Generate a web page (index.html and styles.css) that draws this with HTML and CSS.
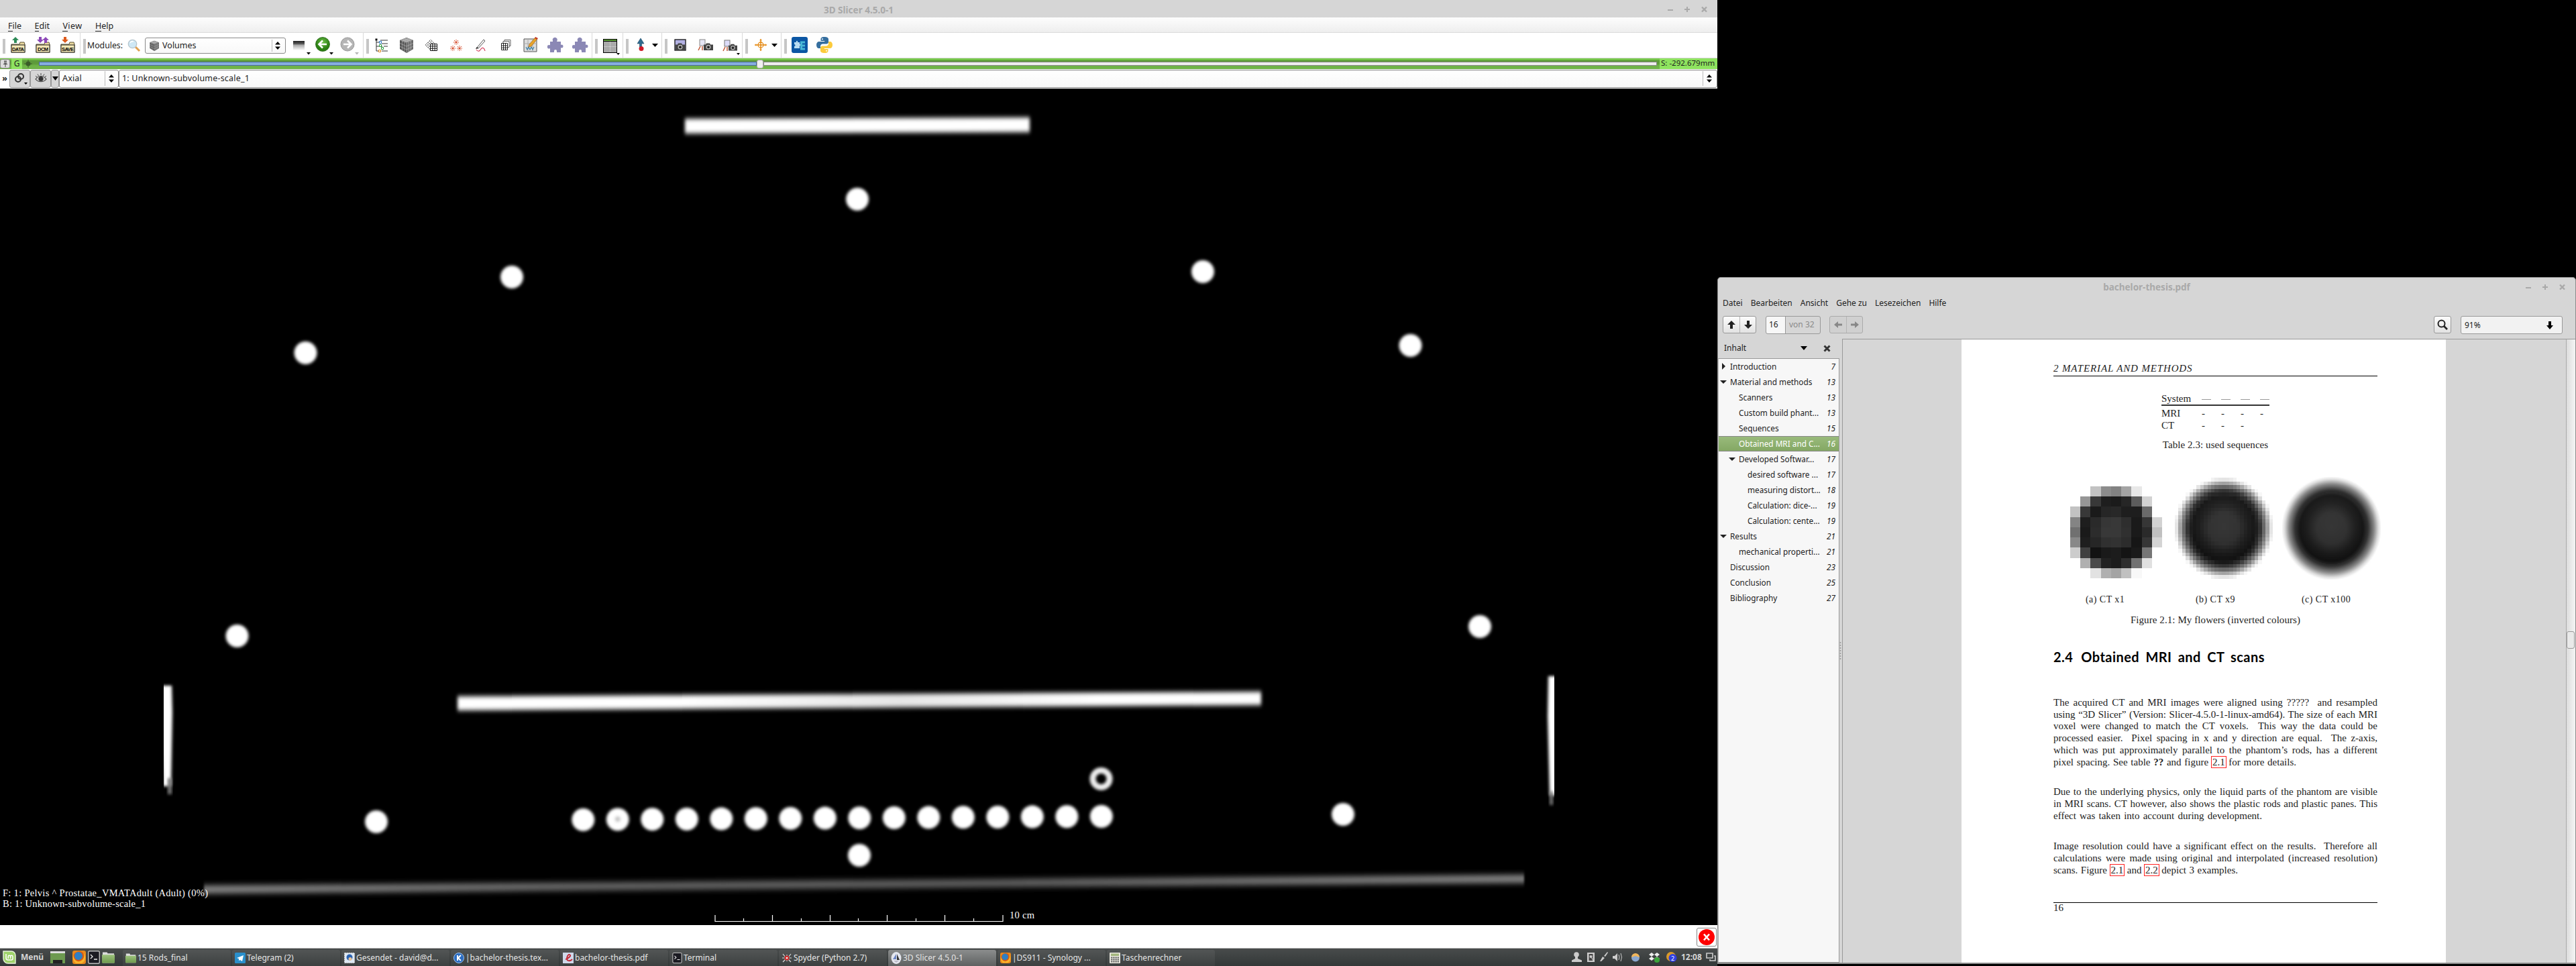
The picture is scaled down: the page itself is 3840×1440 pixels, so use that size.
FILE: index.html
```html
<!DOCTYPE html>
<html lang="en">
<head>
<meta charset="utf-8">
<title>Desktop</title>
<link rel="stylesheet" href="styles.css">
</head>
<body>
<svg class="defs" width="0" height="0">
  <defs>
    <linearGradient id="gFolder" x1="0" y1="0" x2="0" y2="1"><stop offset="0" stop-color="#9cc27c"/><stop offset="1" stop-color="#6f9a4e"/></linearGradient>
    <radialGradient id="gGreen" cx=".5" cy=".35"><stop offset="0" stop-color="#6cc04a"/><stop offset="1" stop-color="#2a7d12"/></radialGradient>
    <linearGradient id="gFade" x1="0" y1="0" x2="0" y2="1"><stop offset="0" stop-color="#222"/><stop offset=".3" stop-color="#555"/><stop offset=".45" stop-color="#aaa"/><stop offset="1" stop-color="#fff"/></linearGradient>
    <symbol id="box" viewBox="0 0 24 24"><path d="M2 11h12l1-3h6l1 3v12H2z" fill="#e9d9a0" stroke="#5d5330"/><rect x="2" y="12" width="20" height="11" fill="#f4e7b4" stroke="#222" stroke-width="1"/></symbol>
    <symbol id="up" viewBox="0 0 10 9"><path d="M5 0l5 5H7v4H3V5H0z"/></symbol>
    <symbol id="cube" viewBox="0 0 24 24"><path d="M12 1l10 4v13l-10 6-10-6V5z" fill="#555"/><path d="M12 1l10 4-10 4L2 5z" fill="#999"/><path d="M12 9l10-4v13l-10 6z" fill="#6b6b6b"/><path d="M2 9.500l10 4.500 10-4.500M2 14l10 5 10-5M5.500 6.500v14M8.700 8v14M15.300 8v14M18.500 6.500v14M12 9v15M5.500 3.700l10 4M8.700 2.500l10 4M18.500 3.700l-10 4M15.300 2.500l-10 4" fill="none" stroke="#ccc" stroke-width=".5"/></symbol>
    <symbol id="puzzle" viewBox="0 0 24 24"><path d="M8 7V5.500a3.500 3.500 0 1 1 6.500 0L14 7h6v5l1-.5a2.500 2.500 0 1 1 0 5l-1-.5v7h-6v-2a2 2 0 1 0-4 0v2H4v-6l-1 .5a2.800 2.800 0 1 1 0-5.500l1 .5V7z" fill="#8b88b5"/></symbol>
    <symbol id="spin" viewBox="0 0 8 12"><path d="M4 0l4 4.500H0zM4 12L0 7.500h8z"/></symbol>
    <symbol id="star" viewBox="0 0 8 8"><path d="M4 0v8M0 4h8M1 1l6 6M7 1L1 7" stroke="#d2401e" stroke-width="1" stroke-dasharray="1.500 .7" fill="none"/></symbol>
    <symbol id="cam" viewBox="0 0 14 11"><path d="M0 2.500h3l1-2h5l1 2h4V11H0z" fill="#444"/><circle cx="7" cy="6.200" r="3.400" fill="#bbb"/><circle cx="7" cy="6.200" r="2" fill="#222"/></symbol>
    <symbol id="firefox" viewBox="0 0 20 20"><rect width="20" height="20" rx="3" fill="#e8891c"/><circle cx="10" cy="10" r="9" fill="#d95b12"/><circle cx="9" cy="8" r="6" fill="#2f7fc4"/><path d="M1 6c1 9 7 12 12 9 5-3 5-8 3-12 5 5 4 13-2 16H5C1 16 0 11 1 6z" fill="#f6b42c"/></symbol>
    <symbol id="term" viewBox="0 0 18 20"><rect x=".7" y=".7" width="16.600" height="18.600" rx="2" fill="#1b1b22" stroke="#bbb" stroke-width="1.400"/><path d="M4 6l3 3-3 3M9 13h5" stroke="#eee" fill="none" stroke-width="1.300"/></symbol>
    <symbol id="folder" viewBox="0 0 20 20"><path d="M1 2h7l1 2h10v15H1z" fill="#ddd"/><path d="M0 6h20v13H0z" fill="url(#gFolder)"/></symbol>
  </defs>
</svg>

<main class="desktop">

  <section class="slicer">
    <header class="titlebar">
      <span class="title">3D Slicer 4.5.0-1</span>
      <span class="winbtns"><svg width="60" height="10"><path d="M0 6h8M25 5h8M29 1v8" stroke="#a9a9a9" stroke-width="2"/><path d="M51 1.500l7 7M58 1.500l-7 7" stroke="#a9a9a9" stroke-width="2.400"/></svg></span>
    </header>
    <nav class="menubar"><span><u>F</u>ile</span><span><u>E</u>dit</span><span class="view-item"><u>V</u>iew</span><span><u>H</u>elp</span></nav>

    <div class="toolbar">
      <div class="group g1"><i class="grip"></i>
        <svg class="ic" viewBox="0 0 24 24"><use href="#box" width="24" height="24"/><use href="#up" x="3" y="0" width="10" height="9" fill="#2d8a57"/><text class="boxtxt" x="12" y="21" textLength="18">DATA</text></svg>
        <svg class="ic" viewBox="0 0 24 24"><use href="#box" width="24" height="24"/><use href="#up" x="11" y="0" width="10" height="9" fill="#8d49b8"/><path d="M8 9l5-5h-3V0H6v4H3z" fill="#8d49b8"/><text class="boxtxt" x="12" y="21" textLength="16">DCM</text></svg>
        <svg class="ic" viewBox="0 0 24 24"><use href="#box" width="24" height="24"/><path d="M8 9l5-5h-3V0H6v4H3z" fill="#dd5a1c"/><text class="boxtxt" x="12" y="21" textLength="18">SAVE</text></svg>
      </div>
      <div class="group g2"><i class="grip"></i>
        <span class="modlabel">Modules:</span>
        <svg class="mag" width="20" height="20" viewBox="0 0 20 20"><path d="M12 12l6 6" stroke="#e0a050" stroke-width="3"/><circle cx="7.500" cy="7.500" r="6.200" fill="#cfe8f5" stroke="#b5c4cc" stroke-width="1.300"/><path d="M4 6a4 4 0 0 1 5-2" stroke="#fff" fill="none" stroke-width="1.500"/></svg>
        <div class="combo modcombo"><svg width="16" height="16"><use href="#cube"/></svg><span>Volumes</span><i class="vline"></i><svg width="8" height="12"><use href="#spin"/></svg></div>
        <svg class="hist" width="104" height="30" viewBox="0 0 104 30"><rect x="0" y="8" width="17" height="14" fill="url(#gFade)"/><path d="M20 25h6l-3 3.500z"/><circle cx="44" cy="13" r="10.500" fill="url(#gGreen)" stroke="#2c6a1a" stroke-width=".8"/><path d="M50 13H39M44 7.500L38.500 13l5.500 5.500" stroke="#fff" stroke-width="2.600" fill="none"/><path d="M54 25h6l-3 3.500z"/><circle cx="81" cy="13" r="10" fill="#b5b5b5" stroke="#999"/><path d="M75 13h11M81 7.500l5.500 5.500-5.500 5.500" stroke="#fff" stroke-width="2.600" fill="none"/><path d="M92 25h6l-3 3.500z" fill="#b5b5b5"/></svg>
      </div>
      <div class="group g3"><i class="grip"></i>
        <svg class="ic" viewBox="0 0 24 24"><path d="M4 3v18h4M4 8h5M4 14h9M10 5h11M12 10h9M15 14h6M12 21h9" stroke="#333" stroke-width="1" fill="none"/><path d="M2.500 2.500h3v3h-3z" fill="#111"/><path d="M8.500 6.500h3v3h-3z" fill="#fff" stroke="#2a78c8"/><path d="M8.500 11.500h3v3h-3zM11.500 15.500h3v3h-3z" fill="#fff" stroke="#2a9a3a"/><path d="M7.500 19.500h3v3h-3z" fill="#fff" stroke="#e08a20"/></svg>
        <svg class="ic" viewBox="0 0 24 24"><use href="#cube"/></svg>
        <svg class="ic" viewBox="0 0 24 24"><path d="M3 12l8-8 8 8-8 8zM5 10l8 8M7 8l8 8M9 6l8 8M5 14l8-8M7 16l8-8M9 18l8-8" fill="none" stroke="#444" stroke-width=".8" stroke-dasharray="1.500 .6"/><path d="M10.500 10.500h10v10h-10z" fill="#fff" stroke="#111"/><path d="M13.800 10v11M17.200 10v11M10 13.800h11M10 17.200h11" stroke="#111"/></svg>
        <svg class="ic" viewBox="0 0 24 24"><use href="#star" x="8" y="4" width="8" height="8"/><use href="#star" x="3" y="13" width="8" height="8"/><use href="#star" x="13" y="13" width="8" height="8"/></svg>
        <svg class="ic" viewBox="0 0 24 24"><path d="M6 16L16 4l2 2L8 17z" fill="#fff" stroke="#555"/><path d="M4 18l2-3 2 2z" fill="#111"/><path d="M5 19c3 4 5 2 7-1s5-2 6 3" fill="none" stroke="#d33a5a" stroke-width="1.200"/></svg>
        <svg class="ic" viewBox="0 0 24 24"><g fill="#fff" stroke="#555" stroke-width=".9"><path d="M10 4.500h9v9h-9z"/><path d="M8 6.500h9v9H8z"/><path d="M5.500 9.500h9v10h-9z" stroke="#111"/></g><path d="M8.500 9v11M11.500 9v11M5 13h10M5 16.300h10" stroke="#111" stroke-width=".9"/></svg>
        <svg class="ic" viewBox="0 0 24 24"><path d="M2 3h19v19H2z" fill="#ddd" stroke="#555"/><path d="M8 3v19M15 3v19M2 10h19" stroke="#aaa"/><path d="M5 15l2 4 2-4 2 4 2-4 2 4 2-4" stroke="#3a7fa8" fill="none" stroke-width="1.200"/><path d="M19 1l3 2-9 11-4 1 1-4z" fill="#e8a42c" stroke="#a0681a" stroke-width=".7"/><path d="M19 0l4 2-1.500 2-3.500-2z" fill="#c0392b"/></svg>
        <svg class="ic" viewBox="0 0 24 24"><use href="#puzzle"/></svg>
        <svg class="ic" viewBox="0 0 24 24"><use href="#puzzle"/></svg>
      </div>
      <div class="group g4"><i class="grip"></i>
        <svg class="ic wide" width="28" height="30" viewBox="0 0 28 30"><rect x="1.500" y="5.500" width="20" height="20" fill="#aaa" stroke="#000"/><rect x="2" y="6" width="19" height="2" fill="#5fa03a"/><path d="M2 8.500h19" stroke="#000"/><path d="M11.500 9v16M2 16.500h19" stroke="#ddd" stroke-dasharray="1 1"/><path d="M21 26h5l-2.500 3z"/></svg>
      </div>
      <div class="group g5"><i class="grip"></i>
        <svg class="ic" viewBox="0 0 24 24"><path d="M11 2l5 8h-3.500v6h-3v-6H6z" fill="#2f6b8f" stroke="#1c4a66" stroke-width=".6"/><circle cx="12" cy="17.500" r="3.500" fill="#cf1a28"/></svg>
        <svg class="drop" width="9" height="5"><path d="M0 0h9L4.500 5z"/></svg>
      </div>
      <div class="group g6"><i class="grip"></i>
        <svg class="ic" viewBox="0 0 24 24"><rect x="4" y="4" width="16" height="16" fill="#b3b1e3" stroke="#111" stroke-width="1.300"/><use href="#cam" x="5" y="9" width="14" height="11"/></svg>
        <svg class="ic" viewBox="0 0 24 24"><rect x="4" y="4" width="8" height="9" fill="#e6e6f5" stroke="#888"/><path d="M5 14l-3 6M8 14v6" stroke="#c0583a" stroke-width="1.500"/><use href="#cam" x="10" y="9" width="14" height="11"/></svg>
        <svg class="ic wide" width="28" height="30" viewBox="0 0 28 30"><rect x="4" y="7" width="8" height="9" fill="#dcdcf8" stroke="#777"/><path d="M5 17l-3 6M8 17v6" stroke="#c0583a" stroke-width="1.500"/><use href="#cam" x="10" y="12" width="13" height="11"/><path d="M22 26h5l-2.500 3z"/></svg>
      </div>
      <div class="group g7"><i class="grip"></i>
        <svg class="ic" viewBox="0 0 24 24"><path d="M12 3v18M3 12h18" stroke="#e58a14" stroke-width="1.500"/><circle cx="12" cy="12" r="4" fill="none" stroke="#e58a14" stroke-width="1.300"/><path d="M10.500 5h3M10.500 19h3M5 10.500v3M19 10.500v3" stroke="#e58a14"/></svg>
        <svg class="drop" width="9" height="5"><path d="M0 0h9L4.500 5z"/></svg>
      </div>
      <div class="group g8"><i class="grip"></i>
        <svg class="ic" viewBox="0 0 24 24"><rect width="24" height="24" rx="3" fill="#0b56a4"/><path d="M4 8h3c-1-3 3-3 2 0h3v3c3-1 3 3 0 2v4H4v-3c2 0 2-3 0-3z" fill="#b8dcf2"/><path d="M13 6.500h7v3h-4v2h4v3h-4v2h4v3h-7z" fill="#49b8d6"/></svg>
        <svg class="ic" viewBox="0 0 24 24"><path d="M11.800 0C7 0 6.500 2 6.500 3.500V6h5.700v1H4C1.500 7 0 9 0 12s1.500 5 3.500 5H6v-3c0-2 1.500-3.500 3.500-3.500h5.500c1.500 0 3-1.200 3-3v-4C18 1.500 16 0 11.800 0z" fill="#366f9f"/><path d="M12.200 24c4.800 0 5.300-2 5.300-3.500V18h-5.700v-1H20c2.500 0 4-2 4-5s-1.500-5-3.500-5H18v3c0 2-1.500 3.500-3.500 3.500H9c-1.500 0-3 1.200-3 3v4C6 22.500 8 24 12.200 24z" fill="#fccb3c"/><circle cx="9" cy="3.300" r="1" fill="#fff"/><circle cx="15" cy="20.700" r="1" fill="#fff"/></svg>
      </div>
    </div>

    <div class="slicebar">
      <span class="pin"><svg width="10" height="10"><path d="M3 1h4M4 1v4h2V1M2 5.500h6M5 6v4" stroke="#444" fill="none"/></svg></span>
      <span class="tag">G</span>
      <svg class="fit" width="12" height="12"><circle cx="6" cy="6" r="3.500" fill="#3a5c28"/><path d="M6 0v12M0 6h12" stroke="#3a5c28"/></svg>
      <div class="groove"><i class="fill"></i><i class="thumb"></i><i class="rest"></i></div>
      <span class="pos">S: -292.679mm</span>
    </div>

    <div class="ctrlrow">
      <span class="chev">»</span>
      <span class="tb lk"><svg width="24" height="22" viewBox="0 0 24 22"><g fill="none" stroke="#333" stroke-width="2"><circle cx="9" cy="12" r="4"/><circle cx="13" cy="8" r="4"/></g><path d="M18 17h5l-2.500 3z"/></svg></span>
      <span class="tb eye"><svg width="18" height="16" viewBox="0 0 18 16"><path d="M1 9c4-6 12-6 16 0-4 5-12 5-16 0z" fill="#ccc" stroke="#444" stroke-width="1.200"/><circle cx="9" cy="8.500" r="3.600" fill="#333"/><path d="M9 0v3M4 1.500l1.500 2.500M14 1.500L12.500 4M1 4l2 2M17 4l-2 2" stroke="#444"/></svg></span>
      <span class="tb arr"><svg width="9" height="6"><path d="M0 0h9L4.500 6z"/></svg></span>
      <div class="combo axial"><span>Axial</span><i class="vline"></i><svg width="8" height="12"><use href="#spin"/></svg></div>
      <div class="combo volume"><span>1: Unknown-subvolume-scale_1</span><i class="vline"></i><svg width="8" height="12"><use href="#spin"/></svg></div>
    </div>

    <svg class="slice" width="2560" height="1247" viewBox="0 132 2560 1247">
      <defs>
        <filter id="b1" x="-30%" y="-30%" width="160%" height="160%"><feGaussianBlur stdDeviation="2"/></filter>
        <filter id="b2" filterUnits="userSpaceOnUse" x="0" y="132" width="2560" height="1247"><feGaussianBlur stdDeviation="2.500 3.500"/></filter>
        <filter id="b3" filterUnits="userSpaceOnUse" x="0" y="132" width="2560" height="1247"><feGaussianBlur stdDeviation="1.500 4"/></filter>
        <linearGradient id="rod"><stop offset="0" stop-color="#fff"/><stop offset=".28" stop-color="#fff"/><stop offset=".55" stop-color="#e6e6e6"/><stop offset=".8" stop-color="#fff"/><stop offset="1" stop-color="#fff"/></linearGradient>
        <linearGradient id="pane"><stop offset="0" stop-color="#888"/><stop offset=".3" stop-color="#666"/><stop offset=".6" stop-color="#606060"/><stop offset="1" stop-color="#888"/></linearGradient>
        <clipPath id="cl"><path d="M244 1000h30v200h-30z"/></clipPath>
        <clipPath id="cr"><path d="M2290 990h27v225h-27z"/></clipPath>
      </defs>
      <rect y="132" width="2560" height="1247" fill="#000"/>
      <path d="M1021 177L1535 175V197L1021 199Z" fill="#fff" filter="url(#b2)"/>
      <path d="M683 1039L1879 1032V1050L683 1058Z" fill="url(#rod)" stroke="url(#rod)" stroke-width="2" filter="url(#b2)"/>
      <path d="M304 1320L2272 1304V1316L304 1332Z" fill="url(#pane)" filter="url(#b3)"/>
      <g clip-path="url(#cl)"><path d="M238 1022h18l1 40-2 110h-12z" fill="#fff" filter="url(#b1)"/><path d="M250 1160h6v24h-6z" fill="#777" filter="url(#b1)"/></g>
      <g clip-path="url(#cr)"><path d="M2325 1008h-17l-1 60 3 118h15z" fill="#fff" filter="url(#b1)"/><path d="M2310 1180h5v20h-5z" fill="#777" filter="url(#b1)"/></g>
      <g class="dots">
        <circle cx="1278" cy="297" r="17"/><circle cx="1793" cy="405" r="17"/><circle cx="763" cy="413" r="17"/><circle cx="455.500" cy="526" r="17"/><circle cx="2102.500" cy="515" r="17"/><circle cx="353.500" cy="948" r="17"/><circle cx="2206" cy="934" r="17"/><circle cx="561" cy="1225" r="17"/><circle cx="2002" cy="1214" r="17"/><circle cx="1281" cy="1275" r="17"/>
        <circle cx="869.300" cy="1222" r="17"/><circle cx="920.800" cy="1221.500" r="17"/><circle cx="972.300" cy="1221.300" r="17"/><circle cx="1023.800" cy="1221" r="17"/><circle cx="1075.300" cy="1220.600" r="17"/><circle cx="1126.800" cy="1220.300" r="17"/><circle cx="1178.300" cy="1220" r="17"/><circle cx="1229.800" cy="1219.600" r="17"/><circle cx="1281.300" cy="1219.300" r="17"/><circle cx="1332.800" cy="1219" r="17"/><circle cx="1384.300" cy="1218.600" r="17"/><circle cx="1435.800" cy="1218.300" r="17"/><circle cx="1487.300" cy="1218" r="17"/><circle cx="1538.800" cy="1217.600" r="17"/><circle cx="1590.300" cy="1217.300" r="17"/><circle cx="1641.800" cy="1217" r="17"/>
        <circle cx="1641.500" cy="1161" r="12.500" class="ring"/>
        <circle cx="920.800" cy="1221" r="4" class="dim"/>
      </g>
      <path d="M1066 1364v9.500h429V1364M1151.500 1364v9M1237.500 1364v9M1322.500 1364v9M1408.500 1364v9M1108.500 1369v4M1194.500 1369v4M1279.500 1369v4M1365.500 1369v4M1451.500 1369v4" stroke="#fff" stroke-width="1.200" fill="none"/>
      <g class="annot"><text x="1505" y="1369" textLength="37">10 cm</text><text x="4" y="1336" textLength="306">F: 1: Pelvis ^ Prostatae_VMATAdult (Adult) (0%)</text><text x="4" y="1352" textLength="213">B: 1: Unknown-subvolume-scale_1</text></g>
    </svg>

    <footer class="status"><span class="err"><svg width="26" height="26"><circle cx="13" cy="13" r="12" fill="#f00"/><path d="M9 8.500l8 9M17 8.500l-8 9" stroke="#fff" stroke-width="2.600"/></svg></span></footer>
  </section>

  <footer class="taskbar">
    <div class="launch">
      <svg class="mint" width="20" height="20"><path d="M1 1h12a6 6 0 0 1 6 6v12H8a7 7 0 0 1-7-7z" fill="#9ed36a" stroke="#e8f5dc" stroke-width="1.400"/><path d="M5 5v6a3 3 0 0 0 3 3h5a2 2 0 0 0 2-2V9a1.700 1.700 0 0 0-3.400 0v3-3a1.700 1.700 0 0 0-3.400 0v3" fill="none" stroke="#fff" stroke-width="1.500"/></svg>
      <b class="menu">Menü</b>
      <svg class="show" width="22" height="20"><rect width="22" height="18" y="1" fill="#6d9a50"/><path d="M0 1h22v3H0z" fill="#ddd"/><path d="M4 14h14v5H4z" fill="#222"/></svg>
      <svg width="20" height="20"><use href="#firefox"/></svg>
      <svg width="18" height="20"><use href="#term"/></svg>
      <svg width="19" height="20"><use href="#folder"/></svg>
    </div>
    <div class="tasks">
      <div class="task"><svg width="16" height="16"><use href="#folder"/></svg><span>15 Rods_final</span></div>
      <div class="task"><svg width="16" height="16"><rect width="16" height="16" rx="1.500" fill="#2a8fcb"/><path d="M3 8l10-4-2 9-3-2-2 1v-3z" fill="#fff"/></svg><span>Telegram (2)</span></div>
      <div class="task"><svg width="16" height="16"><rect x=".7" y=".7" width="14.600" height="14.600" fill="#dde8f4" stroke="#eee" stroke-dasharray="2 1"/><circle cx="8" cy="7" r="4.500" fill="#2a62b0"/><circle cx="9" cy="9.500" r="2.500" fill="#e8c49a"/></svg><span>Gesendet - david@d...</span></div>
      <div class="task"><svg width="16" height="16"><circle cx="8" cy="8" r="7.500" fill="#2b6cc0" stroke="#9cc2ee"/><path d="M6 4v8M11 4L7 8l4 4" stroke="#fff" stroke-width="2" fill="none"/></svg><span>|bachelor-thesis.tex...</span></div>
      <div class="task"><svg width="16" height="16"><rect width="16" height="16" fill="#cfd8ea"/><path d="M4 10c6-2 9-6 6-7s-6 8-2 9 5-1 6-2" stroke="#c2202c" stroke-width="1.800" fill="none"/></svg><span>bachelor-thesis.pdf</span></div>
      <div class="task"><svg width="15" height="16"><use href="#term"/></svg><span>Terminal</span></div>
      <div class="task"><svg width="16" height="16"><path d="M2 2l4 5M14 2l-4 5M1 8h14M2 14l4-4M14 14l-4-4M8 3v10" stroke="#ddd" stroke-width="1.200"/><circle cx="8" cy="8" r="3.500" fill="#c22"/><circle cx="8" cy="8" r="1.500" fill="#eee"/></svg><span>Spyder (Python 2.7)</span></div>
      <div class="task active"><svg width="16" height="18"><ellipse cx="8" cy="9" rx="7.500" ry="9" fill="#e4e6ee"/><path d="M8 3v8H3z" fill="#6d86c4"/><path d="M9 3l4 9H9z" fill="#333"/><path d="M4 13h8l-4 3z" fill="#b9b9c8"/></svg><span>3D Slicer 4.5.0-1</span></div>
      <div class="task"><svg width="16" height="16"><use href="#firefox"/></svg><span>|DS911 - Synology ...</span></div>
      <div class="task"><svg width="16" height="16"><rect width="16" height="16" rx="1" fill="#e8e6dc"/><rect x="2" y="1.500" width="12" height="3.500" fill="#a3b57c"/><path d="M2 7.500h12M2 10.500h12M2 13.500h12" stroke="#666" stroke-width="2" stroke-dasharray="2.400 .8"/></svg><span>Taschenrechner</span></div>
    </div>
    <div class="tray">
      <svg width="164" height="18" viewBox="2342 1418 164 18"><g fill="#ccc"><circle cx="2350" cy="1423" r="3.800"/><path d="M2348 1425h4v4l6 2.500v2.500h-15v-2.500l5-2.500z"/><path d="M2366 1420h11v14h-11z"/><path d="M2385 1433l4-7 3 2-5 5zM2391 1425l5-6 1 1-4 6z"/><path d="M2404 1425h3l4-4v12l-4-4h-3z"/></g><path d="M2368.500 1422h6v10h-6z" fill="#444"/><circle cx="2371.500" cy="1426" r="2" fill="#ccc"/><path d="M2372 1427l3 5" stroke="#ccc"/><path d="M2413 1423q2 4 0 8M2416 1421q3 6 0 12" stroke="#ccc" fill="none"/><circle cx="2438" cy="1427.500" r="6" fill="#8ba7cf"/><path d="M2432 1427a6 6 0 0 1 12 0l-6-2z" fill="#f2b65a"/><path d="M2462 1420l4 3-4 3-4-3zM2470 1420l4 3-4 3-4-3zM2462 1426l4 3-4 3-4-3zM2470 1426l4 3-4 3-4-3z" fill="#eee"/><circle cx="2470" cy="1431" r="4" fill="#3aa53a"/><circle cx="2491" cy="1426" r="7" fill="#d99a2a"/><circle cx="2493.500" cy="1428" r="6" fill="#2f3fe0"/><text x="2493.500" y="1432" class="badge">2</text></svg>
      <b class="clock">12:08</b>
      <svg width="15" height="14"><path d="M1 1h9v7H1zM12 5h2v7H6v-2" fill="none" stroke="#ccc" stroke-width="1.600"/></svg>
    </div>
  </footer>

  <section class="pdf">
    <header class="ptitle"><span class="title">bachelor-thesis.pdf</span><span class="winbtns"><svg width="60" height="10"><path d="M0 6h8M25 5h8M29 1v8" stroke="#a9a9a9" stroke-width="2"/><path d="M51 1.500l7 7M58 1.500l-7 7" stroke="#a9a9a9" stroke-width="2.400"/></svg></span></header>
    <nav class="pmenu"><span>Datei</span><span>Bearbeiten</span><span>Ansicht</span><span>Gehe zu</span><span>Lesezeichen</span><span>Hilfe</span></nav>
    <div class="ptools">
      <div class="btns"><span><svg width="12" height="12"><path d="M6 0l6 6H8v6H4V6H0z"/></svg></span><span><svg width="12" height="12"><path d="M6 12l6-6H8V0H4v6H0z"/></svg></span></div>
      <div class="pageno"><span class="cur">16</span><span class="of">von 32</span></div>
      <div class="btns off"><span><svg width="12" height="12"><path d="M0 6l6-5v3.500h6v3H6V11z"/></svg></span><span><svg width="12" height="12"><path d="M12 6L6 1v3.500H0v3h6V11z"/></svg></span></div>
      <div class="btns find"><span><svg width="16" height="16"><circle cx="6.500" cy="6.500" r="5" fill="none" stroke="#222" stroke-width="2"/><path d="M10 10l5 5" stroke="#222" stroke-width="2.600"/></svg></span></div>
      <div class="zoom"><span>91%</span><svg width="10" height="12"><path d="M5 12l5-6H7V0H3v6H0z"/></svg></div>
    </div>
    <div class="pbody">
      <aside class="side">
        <div class="sidehead"><span>Inhalt</span><svg width="10" height="6"><path d="M0 0h10L5 6z"/></svg><svg width="11" height="11"><path d="M1.500 1.500l8 8M9.500 1.500l-8 8" stroke="#333" stroke-width="3"/></svg></div>
        <ul class="tree">
          <li class="l0 closed"><span>Introduction</span><em>7</em></li>
          <li class="l0 open"><span>Material and methods</span><em>13</em></li>
          <li class="l1"><span>Scanners</span><em>13</em></li>
          <li class="l1"><span>Custom build phant...</span><em>13</em></li>
          <li class="l1"><span>Sequences</span><em>15</em></li>
          <li class="l1 sel"><span>Obtained MRI and C...</span><em>16</em></li>
          <li class="l1 open"><span>Developed Softwar...</span><em>17</em></li>
          <li class="l2"><span>desired software ...</span><em>17</em></li>
          <li class="l2"><span>measuring distort...</span><em>18</em></li>
          <li class="l2"><span>Calculation: dice-...</span><em>19</em></li>
          <li class="l2"><span>Calculation: cente...</span><em>19</em></li>
          <li class="l0 open"><span>Results</span><em>21</em></li>
          <li class="l1"><span>mechanical properti...</span><em>21</em></li>
          <li class="l0"><span>Discussion</span><em>23</em></li>
          <li class="l0"><span>Conclusion</span><em>25</em></li>
          <li class="l0"><span>Bibliography</span><em>27</em></li>
        </ul>
      </aside>
      <div class="sash"><svg width="3" height="26"><path d="M1.500 0v26" stroke="#999" stroke-width="1.500" stroke-dasharray="2 2"/></svg></div>
      <div class="view">
        <article class="page">
          <h2 class="running">2 MATERIAL AND METHODS</h2>
          <table class="seq">
            <tr class="hd"><td>System</td><td><s></s></td><td><s></s></td><td><s></s></td><td><s></s></td></tr>
            <tr class="r1"><td>MRI</td><td>-</td><td>-</td><td>-</td><td>-</td></tr>
            <tr><td>CT</td><td>-</td><td>-</td><td>-</td><td></td></tr>
          </table>
          <p class="cap">Table 2.3: used sequences</p>
          <div class="figs"><canvas id="figA" width="9" height="9"></canvas><canvas id="figB" width="27" height="27"></canvas><canvas id="figC" width="100" height="100"></canvas></div>
          <div class="subcaps"><span>(a) CT x1</span><span>(b) CT x9</span><span>(c) CT x100</span></div>
          <p class="cap figcap">Figure 2.1: My flowers (inverted colours)</p>
          <h1 class="sec"><span>2.4</span><span>Obtained MRI and CT scans</span></h1>
          <p class="para p1"><span class="ln">The acquired CT and MRI images were aligned using ????? &nbsp;and resampled</span><span class="ln">using “3D Slicer” (Version: Slicer-4.5.0-1-linux-amd64). The size of each MRI</span><span class="ln">voxel were changed to match the CT voxels. &nbsp;This way the data could be</span><span class="ln">processed easier. &nbsp;Pixel spacing in x and y direction are equal. &nbsp;The z-axis,</span><span class="ln">which was put approximately parallel to the phantom’s rods, has a different</span><span class="ln e1">pixel spacing. See table <b>??</b> and figure <a class="ref">2.1</a> for more details.</span></p>
          <p class="para p2"><span class="ln">Due to the underlying physics, only the liquid parts of the phantom are visible</span><span class="ln">in MRI scans. CT however, also shows the plastic rods and plastic panes. This</span><span class="ln e2">effect was taken into account during development.</span></p>
          <p class="para p3"><span class="ln">Image resolution could have a significant effect on the results. &nbsp;Therefore all</span><span class="ln">calculations were made using original and interpolated (increased resolution)</span><span class="ln e3">scans. Figure <a class="ref">2.1</a> and <a class="ref">2.2</a> depict 3 examples.</span></p>
          <p class="folio">16</p>
        </article>
        <div class="scroll"><i></i></div>
      </div>
    </div>
  </section>
</main>
<script src="figures.js"></script>
</body>
</html>
```
FILE: styles.css
```css
*{box-sizing:border-box}
html,body{margin:0;padding:0;background:#000}
body{width:3840px;height:1440px;overflow:hidden;font:12px/18px "Noto Sans","Open Sans",sans-serif;color:#222}
svg{display:block;flex:none}
.defs{position:absolute}
.desktop{position:relative;width:3840px;height:1440px;background:#000;overflow:hidden}
span,b,em{white-space:nowrap}

/* 3D Slicer */
.slicer{position:absolute;left:0;top:0;width:2560px;height:1414px;background:#fff;display:flex;flex-direction:column;font-size:12.5px}
.titlebar{height:26px;background:#d6d6d6;display:flex;justify-content:center;align-items:center;position:relative;padding-top:4px}
.title{font-weight:700;color:#a9a9a9;font-size:13.5px}
.winbtns{position:absolute;right:14px;top:9px}
.menubar{height:23px;background:linear-gradient(#fdfdfd,#eee);border-bottom:1px solid #dcdcdc;display:flex;align-items:center;padding:3px 0 0 12px;gap:19.5px}
.menubar u{text-decoration:none;box-shadow:inset 0 -1px #222;display:inline-block;line-height:16px}
.view-item{letter-spacing:.4px}
.toolbar{height:38px;display:flex;border-bottom:1px solid #d6d6d6}
.group{display:flex;align-items:center;border-right:1px solid #d9d9d9;padding-left:4px;gap:13px;height:37px}
.grip{width:4px;height:22px;background:#c6c6c6;flex:none;margin-right:-6px;margin-top:2px}
.ic{width:24px;height:24px;margin-top:-1px}
.ic.wide{width:28px;height:30px;margin-top:1px}
.boxtxt{font:700 7.5px "Liberation Sans",sans-serif;text-anchor:middle}
.g1{width:120px}.g2{width:422px;gap:0}.g3{width:341px}.g4{width:46px}.g5{width:58px}.g6{width:120px}.g7{width:58px}.g8{border:0}
.g2 .grip{margin-right:2px}
.modlabel{width:61px;font-size:12.3px}
.mag{margin-right:6px}
.combo{display:flex;align-items:center;border:1px solid #8a8a8a;border-radius:3px;background:linear-gradient(#fff,#f8f8f8);color:#222}
.combo .vline{margin-left:auto;width:1px;background:#bbb}
.modcombo{width:213px;height:24px;padding:0 7px 0 5px}
.modcombo span{margin-left:4px}
.modcombo .vline{height:18px;margin-right:4px}
.hist{margin-left:11px;margin-top:1px}
.drop{margin-left:-9px;margin-top:-1px}
.slicebar{height:16px;display:flex;align-items:center;background:linear-gradient(#79cc4c 0 2px,#5e9a3b 3px 8px,#6fb348 11px)}
.pin{width:15px;height:14px;background:#ddd;border:1px solid #888;border-radius:3px;display:flex;justify-content:center;align-items:center;margin-right:2px}
.tag{width:16px;height:16px;background:#8ee35f;text-align:center;line-height:15px;font-size:12px}
.fit{margin-left:3px}
.groove{flex:1;display:flex;align-items:center;margin:0 4px 0 10px}
.fill{width:1070px;height:6px;border:1px solid #4a6a9a;background:#86aee0}
.thumb{width:10px;height:13px;border:1px solid #aaa;border-radius:3px;background:#f0f0f0}
.rest{flex:1;height:6px;border:1px solid #888;background:#eee}
.pos{width:86px;height:16px;background:#8ee35f;line-height:14px;padding-left:2px;font-size:11.5px}
.ctrlrow{height:29px;display:flex;align-items:center;padding-bottom:1px}
.chev{width:14px;text-align:center;font-weight:700}
.tb{height:27px;background:#d6d6d6;border:1px solid #999;border-radius:3px;display:flex;align-items:center;justify-content:center}
.lk{width:31px}.eye{width:31px}.arr{width:12px}
.axial{width:89px;height:27px;padding:0 6px 0 4px;letter-spacing:.15px}
.ctrlrow .vline{height:22px;margin-right:5px}
.volume{flex:1;height:27px;padding:0 7px 0 4px;letter-spacing:.19px}
.slice{width:2560px;height:1247px}
.dots circle{fill:#fff;filter:blur(2px)}
.dots .ring{fill:none;stroke:#eee;stroke-width:9}
.dots .dim{fill:#c4c4c4}
.annot{font:14.5px "Liberation Serif",serif;fill:#fff}
.status{height:35px;display:flex;justify-content:flex-end;border-bottom:1px solid #bbb;padding:4px 1px 0 0}
.err{width:30px;height:28px;border:1px solid #888;border-radius:3px;display:flex;justify-content:center;align-items:center}

/* panel */
.taskbar{position:absolute;left:0;top:1414px;width:2560px;height:26px;background:linear-gradient(#484b4b,#333838);color:#e6e6e6;display:flex;align-items:center}
.launch{width:183px;display:flex;align-items:center;padding-left:4px;gap:3px}
.launch .menu{margin:0 7px 0 4px;width:34px;color:#d6d6d6}
.launch .show{margin-right:8px}
.tasks{display:flex;gap:2px;flex:1}
.task{width:161px;height:24px;border-radius:3px 3px 0 0;background:linear-gradient(#525555,#3c4040);display:flex;align-items:center;gap:2px;padding-left:4px;margin-top:2px}
.task span{padding-bottom:1px}
.task.active{background:linear-gradient(#8b8d8d,#5e6161)}
.tray{display:flex;align-items:center;padding-right:2px}
.clock{width:37px;color:#d6d6d6}
.badge{font:9px "Noto Sans",sans-serif;fill:#fff;text-anchor:middle}

/* document viewer */
.pdf{position:absolute;left:2560px;top:413px;width:1280px;height:1024px;background:#d6d6d6;border:1px solid #8c8c8c;border-bottom-width:2px;border-radius:5px 5px 0 0;display:flex;flex-direction:column}
.ptitle{height:30px;display:flex;justify-content:center;padding-top:5px;position:relative}
.pmenu{height:24px;display:flex;gap:12px;padding:0 0 0 7px;line-height:16px}
.ptools{height:37px;display:flex;padding:3px 19px 0 7px;align-items:flex-start}
.btns{display:flex;height:26px;border:1px solid #999;border-radius:3px;background:linear-gradient(#fcfcfc,#e2e2e2)}
.btns span{width:24px;display:flex;align-items:center;justify-content:center}
.btns span+span{border-left:1px solid #b5b5b5}
.btns svg{fill:#222}
.btns.off{background:#d0d0d0;border-color:#aaa}
.btns.off svg{fill:#888}
.pageno{display:flex;height:27px;border:1px solid #999;border-radius:3px;margin:0 13px 0 14px;line-height:24px;width:82px}
.cur{width:29px;background:#f7f7f7;border-right:1px solid #999;padding-left:4px;border-radius:3px 0 0 3px}
.of{padding-left:5px;color:#8a8a8a}
.find{margin-left:auto;margin-right:14px}
.zoom{width:152px;height:27px;border:1px solid #999;border-radius:3px;background:#f2f2f2;display:flex;align-items:center;justify-content:space-between;padding:0 13px 0 5px}
.pbody{flex:1;display:flex;min-height:0}
.side{width:181px;display:flex;flex-direction:column}
.sash{width:4px;display:flex;align-items:center}
.sidehead{height:29px;display:flex;align-items:center;padding:0 13px 1px 9px}
.sidehead span{flex:1}
.sidehead svg:last-child{margin-left:24px}
.tree{flex:1;margin:0;padding:0;list-style:none;background:#f7f7f7;border:1px solid #999;border-left-color:#bbb;font-size:11.8px}
.tree li{height:23px;line-height:22.6px;display:flex;justify-content:space-between;padding-right:5px;position:relative}
.tree .l0{padding-left:17px}.tree .l1{padding-left:30px}.tree .l2{padding-left:43px}
.tree .sel{background:linear-gradient(#9abb7c,#83a763);color:#fff;box-shadow:inset 0 1px #888,inset 0 -1px #888}
.open::before,.closed::before{content:"";position:absolute;border:5px solid transparent}
.open::before{border-top-color:#222;left:2px;top:9px}
.l1.open::before{left:15px}
.closed::before{border-left-color:#222;left:5px;top:6px}
.view{flex:1;border:1px solid #999;border-width:1px 0 0 1px;display:flex;min-width:0}
.page{margin-left:177px;width:722px;background:#fff;padding:33px 102px 0 137px;font-family:"Liberation Serif",serif;font-size:15px;color:#222;overflow:hidden}
.page p,.page h1,.page h2{margin:0;font-weight:400}
.page .running{font-size:15px;font-style:italic;line-height:20px;height:22px;border-bottom:1px solid #000;letter-spacing:.86px}
.seq{border-collapse:collapse;margin:24px 0 0 161px;width:160px;line-height:18px;table-layout:fixed}
.seq td{padding:0;height:18px;width:29px}
.seq td:first-child{width:60px}
.seq td:last-child{width:14px}
.seq .hd td{border-bottom:2px solid #333}
.seq .r1 td{padding-top:2px;height:20px}
.seq s{display:block;width:14px;height:1px;background:#999;margin-top:2px}
.page .cap{text-align:center;line-height:18px;margin-top:11px;letter-spacing:.08px}
.figs{display:flex;margin:40px -6px 0 25px;height:151px}
.figs canvas{image-rendering:pixelated;flex:none}
#figA{width:137px;height:137px;margin-top:13px}
#figB{width:146px;height:151px;margin-left:19px}
#figC{width:147px;height:153px;margin:-1px 0 0 14px;image-rendering:auto}
.subcaps{display:flex;font-size:14px;letter-spacing:.45px;line-height:18px;margin-top:22px;padding-left:48px}
.subcaps span:nth-child(1){width:164px}
.subcaps span:nth-child(2){width:158px}
.page .figcap{margin-top:12px}
.page .sec{font:700 20px/24px Lato,sans-serif;margin-top:34px;color:#000;display:flex;gap:12px;letter-spacing:.45px;word-spacing:4px}
.para{line-height:17.7px}
.page .p1{margin-top:48px}.page .p2{margin-top:27px}.page .p3{margin-top:28px}
.ln{display:block;text-align-last:justify;white-space:normal}
.e1{width:362px}.e2{width:311px}.e3{width:275px}
.ref{box-shadow:0 0 0 1px #f22;padding:0 1px}
.page .folio{margin-top:39px;border-top:1px solid #000;line-height:14px}
.scroll{margin-left:auto;width:14px;border-left:1px solid #aaa;background:linear-gradient(90deg,#ddd,#f4f4f4);display:flex}
.scroll i{width:12px;height:26px;margin-top:435px;border:1px solid #999;border-radius:3px;background:#e9e9e9}
```
FILE: figures.js
```js
// Grey levels of the CT rod cross-section, one hex pair per voxel.
const rows = [
  "ffffc28c82a4e8ffff",
  "ff96381e1b265cd2ff",
  "c2381a26281e1e6aff",
  "841e2a36382e1a36d2",
  "701a2c3838301a2ac0",
  "881e2630322c1636d4",
  "cc40121a1c141a76ff",
  "ffb04a221c2e72e0ff",
  "ffffe2b0a4c0f8ffff"
];
function paint(id, n, level) {
  const c = document.getElementById(id).getContext("2d");
  for (let y = 0; y < n; y++) for (let x = 0; x < n; x++) {
    const v = Math.round(level(x, y));
    c.fillStyle = `rgb(${v},${v},${v})`;
    c.fillRect(x, y, 1, 1);
  }
}
paint("figA", 9, (x, y) => parseInt(rows[y].substr(x * 2, 2), 16));

// Radial profile of the interpolated scans: [radius, grey].
const stops = [[0, 54], [0.3, 50], [0.5, 30], [0.64, 22], [0.74, 50], [0.86, 135], [0.95, 220], [1.01, 255], [9, 255]];
function disc(n) {
  return (x, y) => {
    const u = (x + 0.5) / n * 2 - 1, v = (y + 0.5) / n * 2 - 1;
    const r = Math.hypot(u, v);
    let i = 0;
    while (r > stops[i + 1][0]) i++;
    const [a, p] = stops[i], [b, q] = stops[i + 1];
    const g = p + (q - p) * (r - a) / (b - a);
    return Math.max(14, Math.min(255, g - (r < 0.7 ? v * 8 : 0)));
  };
}
paint("figB", 27, disc(27));
paint("figC", 100, disc(100));
```
